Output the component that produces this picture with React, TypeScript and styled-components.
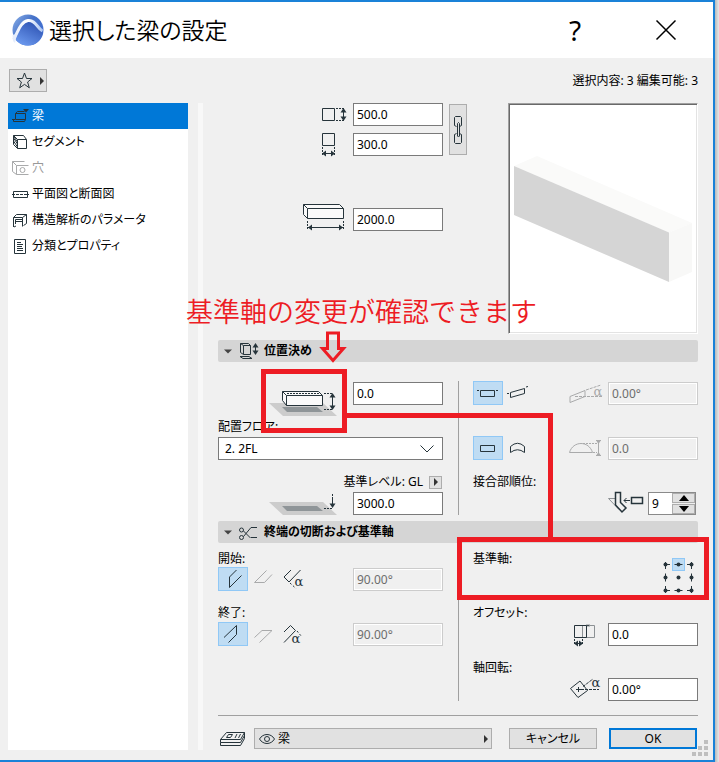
import React, { useState } from "react";
import styled, { createGlobalStyle, css } from "styled-components";

const INK = "#26343b";
const MUTED = "#a9aaab";
const RED = "#ed1c24";
const BLUE = "#1a82d8";

const GlobalStyle = createGlobalStyle`
  * { box-sizing: border-box; }
  body {
    margin: 0;
    background: #d9dadb;
    color: #000;
    font: 12px/16px "Noto Sans", "Noto Sans CJK JP", sans-serif;
    font-feature-settings: "palt";
  }
  button, input, select { font: inherit; font-feature-settings: inherit; color: inherit; margin: 0; }
  button { padding: 0; }
  svg { display: block; flex: none; overflow: visible; }
`;

const Page = styled.div`
  display: flex;
  min-height: 100vh;
  padding-right: 4px;
  background: linear-gradient(to left, #e8e8e9, #b9babb 4px);
`;

const DialogWindow = styled.main`
  position: relative;
  flex: 1;
  display: flex;
  flex-direction: column;
  border: 2px solid ${BLUE};
  border-left: 0;
  background: #f0f0f0;
`;

const TitleBar = styled.header`
  display: flex;
  align-items: center;
  height: 56px;
  padding: 0 26px 0 12px;
  background: #fff;
`;

const Title = styled.h1`
  flex: 1;
  margin: 0 0 0 5px;
  font-size: 23px;
  line-height: 32px;
  font-weight: 350;
`;

const CaptionButton = styled.button`
  display: grid;
  place-items: center;
  width: 42px;
  height: 40px;
  margin-left: 49px;
  border: 0;
  background: none;
  font-size: 28px;
  line-height: 36px;
`;

const Toolbar = styled.div`
  display: flex;
  align-items: flex-start;
  justify-content: space-between;
  height: 45px;
  padding: 11px 15px 0 9px;
`;

const grayButton = css`
  border: 1px solid #adadad;
  background: #e1e1e1;
`;

const FavoriteButton = styled.button`
  ${grayButton}
  display: flex;
  align-items: center;
  gap: 7px;
  width: 38px;
  height: 23px;
  padding-left: 6px;
`;

const Selection = styled.div`
  padding-top: 4px;
`;

const Body = styled.div`
  flex: 1;
  display: grid;
  grid-template-columns: 180px 5px 1fr;
  padding: 0 15px 10px 8px;
`;

const Sidebar = styled.nav`
  background: #fff;
`;

const NavItem = styled.button<{ $active?: boolean }>`
  display: flex;
  align-items: center;
  gap: 3px;
  width: 100%;
  height: 26px;
  padding-left: 4px;
  border: 0;
  background: ${(p) => (p.$active ? "#0078d7" : "transparent")};
  color: ${(p) => (p.$active ? "#fff" : "#000")};
  text-align: left;
  &:disabled { color: #999; }
`;

const Splitter = styled.div`
  margin: 0 -10px 0 10px;
  background: #f8f8f8;
`;

const Panel = styled.div`
  display: flex;
  flex-direction: column;
  padding-left: 25px;
`;

const Geometry = styled.div`
  display: flex;
  align-items: flex-start;
  margin-bottom: 6px;
`;

const Sizes = styled.div`
  flex: 1;
  display: flex;
  flex-direction: column;
  gap: 7px;
`;

const Row = styled.div<{ $top?: number }>`
  display: flex;
  align-items: flex-end;
  justify-content: flex-end;
  gap: 8px;
  margin-top: ${(p) => p.$top ?? 0}px;
`;

const ControlRow = styled(Row)`
  height: 24px;
`;

const ToggleGroup = styled.div`
  display: flex;
  margin-right: auto;
`;

const Toggle = styled.button<{ $on?: boolean }>`
  width: 30px;
  height: 24px;
  border: 1px solid ${(p) => (p.$on ? "#90c8f6" : "transparent")};
  background: ${(p) => (p.$on ? "#bfdcf3" : "transparent")};
  svg { margin: -1px; }
`;

const Field = styled.input`
  width: 90px;
  height: 23px;
  padding: 0 3px;
  border: 1px solid #7a7a7a;
  border-radius: 0;
  background: #fff;
  outline: 0;
  &:disabled {
    border-color: #ccc;
    background: #f0f0f0;
    box-shadow: inset 0 0 0 1px #fff;
    color: #6d6d6d;
  }
`;

const LinkButton = styled.button`
  ${grayButton}
  width: 18px;
  height: 51px;
  margin: 1px 41px 0 6px;
  svg { margin: 0 auto; }
`;

const Preview = styled.div`
  width: 190px;
  height: 231px;
  border: 1px solid;
  border-color: #a0a0a0 #fff #fff #a0a0a0;
  background: #fff;
  box-shadow: inset 1px 1px #696969, inset -1px -1px #e3e3e3;
  padding: 1px;
`;

const SectionHead = styled.button`
  display: flex;
  align-items: center;
  gap: 7px;
  width: 100%;
  height: 22px;
  padding-left: 6px;
  border: 0;
  border-radius: 2px;
  background: #d5d5d5;
  font-weight: 700;
`;

const Columns = styled.div<{ $top?: number }>`
  display: grid;
  grid-template-columns: 1fr 30px 1fr;
  padding-top: ${(p) => p.$top ?? 0}px;
`;

const Divider = styled.div`
  width: 1px;
  margin-left: 15px;
  background: #a0a0a0;
`;

const Caption = styled.label<{ $first?: boolean }>`
  display: block;
  padding: ${(p) => (p.$first ? "8px 0 0" : "14px 0 1px")};
`;

const LevelCaption = styled.div`
  display: flex;
  align-items: center;
  justify-content: flex-end;
  gap: 6px;
  padding: 14px 1px 1px 0;
`;

const SmallMenuButton = styled.button`
  ${grayButton}
  display: grid;
  place-items: center;
  width: 13px;
  height: 13px;
`;

const SelectBox = styled.div`
  display: grid;
  align-items: center;
  width: 100%;
  > * { grid-area: 1 / 1; }
  > svg { justify-self: end; margin-right: 9px; pointer-events: none; }
`;

const Select = styled.select`
  appearance: none;
  width: 100%;
  height: 23px;
  padding: 0 6px;
  border: 1px solid #7a7a7a;
  border-radius: 0;
  background: #fff;
`;

const Spinner = styled.div`
  display: grid;
  grid-template-columns: 23px 23px;
  height: 23px;
  margin-right: 2px;
  border: 1px solid #8a8a8a;
  background: #f0f0f0;
`;

const SpinField = styled.input`
  min-width: 0;
  padding: 0 3px;
  border: 0;
  background: #fff;
  outline: 0;
`;

const SpinButtons = styled.div`
  display: grid;
  grid-template-rows: 1fr 1fr;
  gap: 1px;
  button {
    ${grayButton}
    display: grid;
    place-items: center;
    min-height: 0;
  }
`;

const AnchorArea = styled.fieldset`
  display: flex;
  justify-content: space-between;
  height: 54px;
  min-width: 0;
  margin: 0;
  padding: 0;
  border: 0;
`;

const AnchorGrid = styled.div`
  display: grid;
  grid-template-columns: repeat(3, 13px);
  grid-auto-rows: 13px;
  margin-top: 15px;
`;

const Anchor = styled.label`
  display: grid;
  > * { grid-area: 1 / 1; }
  input { opacity: 0; width: 13px; height: 13px; }
  svg { pointer-events: none; }
  input:checked + svg { background: #bfdcf3; outline: 1px solid #90c8f6; outline-offset: -1px; }
`;

const Footer = styled.footer`
  display: flex;
  align-items: center;
  margin-top: 14px;
  padding: 12px 1px 0 2px;
  border-top: 1px solid #a0a0a0;
`;

const LayerButton = styled.button`
  ${grayButton}
  flex: 1;
  display: flex;
  align-items: center;
  gap: 3px;
  height: 21px;
  margin: 0 17px 0 8px;
  padding: 0 3px 0 4px;
  > svg:last-child { margin-left: auto; }
`;

const DialogButton = styled.button<{ $primary?: boolean }>`
  ${grayButton}
  width: 88px;
  height: 21px;
  line-height: 16px;
  ${(p) => p.$primary && css`
    margin-left: 12px;
    border: 2px solid #0078d7;
  `}
`;

const Grip = styled.svg`
  position: absolute;
  right: 5px;
  bottom: 4px;
`;

const Note = styled.p`
  position: absolute;
  left: 186px;
  top: 291px;
  margin: 0;
  color: ${RED};
  font: 350 27px/36px "Noto Sans CJK JP", sans-serif;
  font-feature-settings: normal;
  white-space: nowrap;
`;

const Marks = styled.svg`
  position: absolute;
  left: 0;
  top: 0;
  pointer-events: none;
`;

type Draw = { w?: number; h?: number; color?: string; children: React.ReactNode };

const Icon = ({ w = 30, h = 24, color = INK, children }: Draw) => (
  <svg width={w} height={h} viewBox={`0 0 ${w} ${h}`} fill="none" stroke={color} color={color} aria-hidden="true">
    {children}
  </svg>
);
const WideIcon = (p: Draw) => <Icon w={80} h={23} {...p} />;
const SideIcon = (p: Draw) => <Icon w={36} h={23} {...p} />;

const Alpha = ({ x, y }: { x: number; y: number }) => (
  <text x={x} y={y} textAnchor="middle" fill="currentColor" stroke="none" fontSize="13" fontFamily="DejaVu Serif">α</text>
);

const VArrow = ({ x, y1, y2, start = true }: { x: number; y1: number; y2: number; start?: boolean }) => (
  <>
    <path d={`M${x} ${y1}V${y2}`} />
    {start && <path d={`M${x} ${y1 - 1}l3 4.500h-6z`} fill="currentColor" stroke="none" />}
    <path d={`M${x} ${y2 + 1}l3-4.500h-6z`} fill="currentColor" stroke="none" />
  </>
);
const HArrow = ({ y, x1, x2 }: { y: number; x1: number; x2: number }) => (
  <>
    <path d={`M${x1} ${y}H${x2}`} />
    <path d={`M${x1} ${y}l4-3v6zM${x2} ${y}l-4-3v6z`} fill="currentColor" stroke="none" />
  </>
);

const RightTriangle = () => (
  <Icon w={4} h={8}><path d="M0 0l4 4-4 4z" fill="#333" stroke="none" /></Icon>
);
const DownTriangle = () => (
  <Icon w={8} h={5}><path d="M0 0.500h8l-4 4z" fill="#444" stroke="none" /></Icon>
);

const Logo = () => (
  <svg width="32" height="32" viewBox="0 0 32 32" aria-hidden="true">
    <defs>
      <linearGradient id="dome" x1="0" y1="0" x2="1" y2="0.8">
        <stop offset="0" stopColor="#8fb4ea" />
        <stop offset="0.45" stopColor="#4672c8" />
        <stop offset="1" stopColor="#3f6fd6" />
      </linearGradient>
      <linearGradient id="sphere" x1="0.8" y1="0" x2="0.2" y2="1">
        <stop offset="0" stopColor="#2a4fb0" />
        <stop offset="1" stopColor="#6d9bf0" />
      </linearGradient>
      <linearGradient id="band" x1="0" y1="0" x2="1" y2="0">
        <stop offset="0" stopColor="#e6edfb" />
        <stop offset="0.5" stopColor="#ffffff" />
        <stop offset="1" stopColor="#a9c4f3" />
      </linearGradient>
    </defs>
    <circle cx="16" cy="16" r="15.500" fill="url(#dome)" />
    <path d="M3 25C7 16 11 8 17 7.500C24 7.500 26 15 31 19C29 27 23 31.500 16 31.500C10 31.500 6 29 3 25Z" fill="url(#sphere)" />
    <path d="M1.500 25.500C6 18 8.500 7.500 16 6.500C23.500 5.500 25 14 30.500 17" fill="none" stroke="url(#band)" strokeWidth="3" />
    <path d="M0.500 21L5 20L3 29L1 27Z" fill="#e6edfb" />
  </svg>
);

const NAV: { label: string; icon: React.ReactNode; off?: boolean }[] = [
  {
    label: "梁",
    icon: (
      <Icon w={17} h={16}>
        <path d="M3.500 5.500h10v6h-10zM0 11.500h3M1.500 12v1.500h11l1-2M3.500 5.500l2-2h7" />
        <path d="M11 1h6l-3 3.500z" fill={INK} stroke="none" />
      </Icon>
    ),
  },
  {
    label: "セグメント",
    icon: (
      <Icon w={17} h={16}>
        <path d="M5.500 5.500h9v9h-9zM1.500 1.500h10l3 4M1.500 1.500v9l4 4M1.500 1.500l4 4" />
        <path d="M1.500 4l4 6M1.500 7l4 6M2 2.500l3 5" />
      </Icon>
    ),
  },
  {
    label: "穴",
    off: true,
    icon: (
      <Icon w={17} h={16} color={MUTED}>
        <path d="M0.500 1.500h12M0.500 1.500v10l4 3v-9l-4-4M4.500 5.500h12M4.500 14.500h12" />
        <circle cx="10.500" cy="10" r="2.500" />
      </Icon>
    ),
  },
  {
    label: "平面図と断面図",
    icon: (
      <Icon w={17} h={16}>
        <path d="M1.500 5.500h14v6h-14z" />
        <path d="M0 8.500h17" strokeDasharray="3 1" />
      </Icon>
    ),
  },
  {
    label: "構造解析のパラメータ",
    icon: (
      <Icon w={17} h={16}>
        <path d="M1.500 15V5.500l3-3h10v9M1.500 5.500h9l4-3M10.500 5.500v9M3.500 12V7.500h7M3.500 9.500h7M11.500 13.500l3-2M4 14l-2 1" />
      </Icon>
    ),
  },
  {
    label: "分類とプロパティ",
    icon: (
      <Icon w={17} h={16}>
        <path d="M2.500 1.500h11v14h-11zM5 4.500h4M5 6.500h6M5 8.500h5M5 10.500h6M5 12.500h6" />
      </Icon>
    ),
  },
];

const ANCHORS = [
  "M6.500 4v7M5 6.500h6", "M2.500 6.500h8", "M6.500 4v7M8 6.500H2",
  "M6.500 2.500v8", "", "M6.500 2.500v8",
  "M6.500 9V2M5 6.500h6", "M2.500 6.500h8", "M6.500 9V2M8 6.500H2",
];

export default function App() {
  const [section, setSection] = useState(0);
  const [anchor, setAnchor] = useState(1);
  const [slope, setSlope] = useState(0);
  const [curve, setCurve] = useState(0);
  const [priority, setPriority] = useState(9);

  return (
    <Page>
      <GlobalStyle />
      <DialogWindow>
        <TitleBar>
          <Logo />
          <Title>選択した梁の設定</Title>
          <CaptionButton aria-label="ヘルプ">?</CaptionButton>
          <CaptionButton aria-label="閉じる">
            <Icon w={20} h={20} color="#000"><path d="M0.500 0.500l19 19M19.500 0.500l-19 19" strokeWidth="1.500" /></Icon>
          </CaptionButton>
        </TitleBar>

        <Toolbar>
          <FavoriteButton aria-label="お気に入り">
            <Icon w={17} h={17}>
              <path d="M8.500 1l2 5.500h5.500l-4.400 3.500 1.700 5.800-4.800-3.400-4.800 3.400 1.700-5.800L1 6.500h5.500z" />
            </Icon>
            <RightTriangle />
          </FavoriteButton>
          <Selection>選択内容: 3 編集可能: 3</Selection>
        </Toolbar>

        <Body>
          <Sidebar>
            {NAV.map((n, i) => (
              <NavItem key={n.label} $active={section === i} disabled={n.off} onClick={() => setSection(i)}>
                {n.icon}
                {n.label}
              </NavItem>
            ))}
          </Sidebar>
          <Splitter />

          <Panel>
            <Geometry>
              <Sizes>
                <Row>
                  <WideIcon>
                    <path d="M57.500 5.500h12v12h-12z" />
                    <path d="M71 5.500h8M71 17.500h8" strokeDasharray="2 1" />
                    <VArrow x={78.5} y1={6} y2={17} />
                  </WideIcon>
                  <Field aria-label="高さ" defaultValue="500.0" />
                </Row>
                <Row>
                  <WideIcon>
                    <path d="M57.500 0.500h12v12h-12z" />
                    <path d="M57.500 14v8M69.500 14v8" strokeDasharray="2 1" />
                    <HArrow y={20.5} x1={57} x2={70} />
                  </WideIcon>
                  <Field aria-label="幅" defaultValue="300.0" />
                </Row>
                <Row $top={45}>
                  <WideIcon>
                    <path d="M38.500-3.500h36l4 4v10h-36l-4-4z" fill="#fafafa" />
                    <path d="M38.500-3.500l4 4h36M42.500 0.500v10" />
                    <path d="M42.500 13v9M78.500 13v9" strokeDasharray="2 1" />
                    <HArrow y={19.5} x1={43} x2={78} />
                  </WideIcon>
                  <Field aria-label="長さ" defaultValue="2000.0" />
                </Row>
              </Sizes>
              <LinkButton aria-label="幅と高さを連動">
                <Icon w={8} h={28}>
                  <path d="M2.500 10.500l-2-1v-8l1-1h5l1 1v8l-2 1M2.500 17.500l-2 1v8l1 1h5l1-1v-8l-2-1" />
                  <path d="M3.500 20V7.500l1-1 1 1V20l-1 1z" />
                </Icon>
              </LinkButton>
              <Preview>
                <svg width="186" height="227" viewBox="0 0 186 227" role="img" aria-label="梁のプレビュー">
                  <path d="M4 61L27 51L182 118L159 127.500Z" fill="#fafaf9" />
                  <path d="M159 127.500L182 118V167L159 177Z" fill="#f8f8f7" />
                  <path d="M4 61L159 127.500V177L4 110Z" fill="#d5d5d5" />
                </svg>
              </Preview>
            </Geometry>

            <SectionHead aria-expanded="true">
              <DownTriangle />
              <Icon w={18} h={18}>
                <path d="M4.500 3.500h7v9h-7zM4.500 3.500l-3-2v9l3 2M1.500 1.500h8l2 2M1 14.500h9l3 2H4z" />
                <VArrow x={16.5} y1={2} y2={12} />
              </Icon>
              位置決め
            </SectionHead>
            <Columns $top={19}>
              <div>
                <ControlRow>
                  <WideIcon>
                    <path d="M4 21H58L72 34H18z" fill="#ccc" stroke="none" />
                    <path d="M17 25H52L58 30H22z" fill="#8f9598" stroke="none" />
                    <path d="M17.500 9.500h36l4 4v10h-36l-4-5z" fill="#fafafa" />
                    <path d="M17.500 9.500l4 4h36M21.500 13.500v10" />
                    <path d="M22 11.500h34M59 11.500h9M59 27.500h9" strokeDasharray="2 1" />
                    <VArrow x={67.5} y1={12} y2={27} />
                  </WideIcon>
                  <Field aria-label="フロアからの高さ" defaultValue="0.0" />
                </ControlRow>
                <Caption htmlFor="story">配置フロア:</Caption>
                <ControlRow>
                  <SelectBox>
                    <Select id="story"><option>2. 2FL</option></Select>
                    <Icon w={14} h={8}><path d="M0.500 0.500L7 7L13.500 0.500" /></Icon>
                  </SelectBox>
                </ControlRow>
                <LevelCaption>
                  <label htmlFor="level">基準レベル: GL</label>
                  <SmallMenuButton aria-label="基準レベルの選択"><RightTriangle /></SmallMenuButton>
                </LevelCaption>
                <ControlRow>
                  <WideIcon>
                    <path d="M4 10H58L72 23H18z" fill="#ccc" stroke="none" />
                    <path d="M17 14H52L58 19H22z" fill="#8f9598" stroke="none" />
                    <path d="M59 16.500h9M67.500 2v6" strokeDasharray="2 1" />
                    <VArrow x={67.5} y1={7} y2={15} start={false} />
                  </WideIcon>
                  <Field id="level" defaultValue="3000.0" />
                </ControlRow>
              </div>
              <Divider />
              <div>
                <ControlRow>
                  <ToggleGroup>
                    <Toggle aria-label="水平" aria-pressed={slope === 0} $on={slope === 0} onClick={() => setSlope(0)}>
                      <Icon><path d="M7.500 9.500h14v6h-14zM4 9.500h2M23 9.500h2" /></Icon>
                    </Toggle>
                    <Toggle aria-label="傾斜" aria-pressed={slope === 1} $on={slope === 1} onClick={() => setSlope(1)}>
                      <Icon><path d="M7.500 11.500l14-4v5l-14 4zM4 12.500h2M23 6l2-0.500" /></Icon>
                    </Toggle>
                  </ToggleGroup>
                  <SideIcon color={MUTED}>
                    <path d="M6 14.500l15-6v6l-15 6z" />
                    <path d="M22 8l15-5M11 14.500h27" strokeDasharray="3 1" />
                    <Alpha x={34} y={14} />
                  </SideIcon>
                  <Field aria-label="傾斜角度" defaultValue="0.00°" disabled />
                </ControlRow>
                <ControlRow $top={31}>
                  <ToggleGroup>
                    <Toggle aria-label="直線" aria-pressed={curve === 0} $on={curve === 0} onClick={() => setCurve(0)}>
                      <Icon><path d="M7.500 9.500h14v6h-14z" /></Icon>
                    </Toggle>
                    <Toggle aria-label="曲線" aria-pressed={curve === 1} $on={curve === 1} onClick={() => setCurve(1)}>
                      <Icon><path d="M7.500 10.500Q14.500 4 21.500 10.500V16.500Q14.500 11 7.500 16.500Z" /></Icon>
                    </Toggle>
                  </ToggleGroup>
                  <SideIcon color={MUTED}>
                    <path d="M5.500 15.500C9 3.500 25 3.500 28.500 15.500Z" />
                    <path d="M19 6.500h14M29 15.500h4" strokeDasharray="2 1" />
                    <path d="M34.500 4v14M32 3.500h5M32 18.500h5" />
                    <path d="M32.500 4h4l-2 3zM32.500 18h4l-2-3z" fill="currentColor" stroke="none" />
                  </SideIcon>
                  <Field aria-label="曲率の高さ" defaultValue="0.0" disabled />
                </ControlRow>
                <Caption htmlFor="priority">接合部順位:</Caption>
                <ControlRow>
                  <SideIcon>
                    <path d="M11 6.500H4.500L15 17.500" stroke="#8c9194" />
                    <path d="M11.500 0.500h5v10l5.500 5.500-4 4-6.500-7z" strokeWidth="1.500" />
                    <path d="M26 8.500h-6M22.500 6l-2.500 2.500 2.500 2.500" />
                    <path d="M27.500 5.500h11v6h-11z" strokeWidth="1.500" />
                  </SideIcon>
                  <Spinner>
                    <SpinField id="priority" value={priority} onChange={(e) => setPriority(Number(e.target.value) || 0)} />
                    <SpinButtons>
                      <button aria-label="上げる" onClick={() => setPriority(priority + 1)}>
                        <Icon w={10} h={6}><path d="M0 6l5-6 5 6z" fill="#000" stroke="none" /></Icon>
                      </button>
                      <button aria-label="下げる" onClick={() => setPriority(priority - 1)}>
                        <Icon w={10} h={6}><path d="M0 0l5 6 5-6z" fill="#000" stroke="none" /></Icon>
                      </button>
                    </SpinButtons>
                  </Spinner>
                </ControlRow>
              </div>
            </Columns>

            <Row $top={6}>
              <SectionHead aria-expanded="true">
                <DownTriangle />
                <Icon w={18} h={16}>
                  <circle cx="2.500" cy="6" r="2" />
                  <circle cx="2.500" cy="13.500" r="2" />
                  <path d="M4.500 7l7 7M4.500 12.500L12 3.500H18M12 13.500h6" />
                </Icon>
                終端の切断および基準軸
              </SectionHead>
            </Row>
            <Columns>
              <div>
                <Caption htmlFor="begin" $first>開始:</Caption>
                <ControlRow>
                  <ToggleGroup>
                    <Toggle aria-label="開始 垂直" aria-pressed="true" $on>
                      <Icon><path d="M18.500 3L11.500 10V20.500L23.500 8.500" /></Icon>
                    </Toggle>
                    <Toggle aria-label="開始 水平" aria-pressed="false">
                      <Icon color={MUTED}><path d="M18.500 3.500L6.500 15.500H16.500L24 7.500" /></Icon>
                    </Toggle>
                    <Toggle aria-label="開始 角度指定" aria-pressed="false">
                      <Icon>
                        <path d="M13 3L6 10L11 15L22.500 3" />
                        <path d="M12 16l6 5.500" strokeDasharray="2 2" />
                        <Alpha x={21} y={19} />
                      </Icon>
                    </Toggle>
                  </ToggleGroup>
                  <Field id="begin" defaultValue="90.00°" disabled />
                </ControlRow>
                <Caption htmlFor="end">終了:</Caption>
                <ControlRow>
                  <ToggleGroup>
                    <Toggle aria-label="終了 垂直" aria-pressed="true" $on>
                      <Icon><path d="M6 15.500L18.500 3.500V12.500L10.500 20.500" /></Icon>
                    </Toggle>
                    <Toggle aria-label="終了 水平" aria-pressed="false">
                      <Icon color={MUTED}><path d="M6.500 15.500L14 8.500H24L11.500 20.500" /></Icon>
                    </Toggle>
                    <Toggle aria-label="終了 角度指定" aria-pressed="false">
                      <Icon>
                        <path d="M6 10L12.500 3.500L17.500 8.500L6 20.500" />
                        <path d="M19 9l5 6" strokeDasharray="2 2" />
                        <Alpha x={18} y={21} />
                      </Icon>
                    </Toggle>
                  </ToggleGroup>
                  <Field id="end" defaultValue="90.00°" disabled />
                </ControlRow>
              </div>
              <Divider />
              <div>
                <AnchorArea>
                  <Caption as="span" $first>基準軸:</Caption>
                  <AnchorGrid role="radiogroup" aria-label="基準軸">
                    {ANCHORS.map((d, i) => (
                      <Anchor key={i}>
                        <input type="radio" name="anchor" aria-label={`基準点 ${i + 1}`} checked={anchor === i} onChange={() => setAnchor(i)} />
                        <Icon w={13} h={13}>
                          <path d={d || "M6 6.500h1"} />
                          <circle cx="6.500" cy="6.500" r="2" fill={INK} stroke="none" />
                        </Icon>
                      </Anchor>
                    ))}
                  </AnchorGrid>
                </AnchorArea>
                <Caption htmlFor="offset" $first>オフセット:</Caption>
                <ControlRow $top={1}>
                  <SideIcon>
                    <path d="M18.500 2.500h12v12h-12z" stroke="#8c9194" />
                    <path d="M10.500 2.500h12v12h-12z" />
                    <path d="M23 3.500l2-2M23 1.500l2 2" />
                    <path d="M10.500 16v6M18.500 16v6" strokeDasharray="2 1" />
                    <HArrow y={20.5} x1={10} x2={19} />
                  </SideIcon>
                  <Field id="offset" defaultValue="0.0" />
                </ControlRow>
                <Caption htmlFor="rotation">軸回転:</Caption>
                <ControlRow>
                  <SideIcon>
                    <path d="M6.500 10.500L16 3L23.500 12.500L14 19.500ZM12 11.500h5M14.500 9v5" />
                    <path d="M19 8.500l10-7.500M17 11.500h18" strokeDasharray="3 1" />
                    <Alpha x={32} y={9} />
                  </SideIcon>
                  <Field id="rotation" defaultValue="0.00°" />
                </ControlRow>
              </div>
            </Columns>

            <Footer>
              <Icon w={26} h={16}>
                <path d="M6.500 1.500h18l-4 7h-20zM0.500 8.500v3h20l4-7M0.500 11.500v3h20l4-7M24.500 1.500v6M8.500 3.500h4l-2 3h-4zM17 3l-2 4M20.500 3l-2 4" />
              </Icon>
              <LayerButton aria-haspopup="listbox">
                <Icon w={16} h={12}>
                  <path d="M0.500 6C4 0 12 0 15.500 6C12 12 4 12 0.500 6Z" />
                  <circle cx="8" cy="6" r="2.500" />
                </Icon>
                梁
                <RightTriangle />
              </LayerButton>
              <DialogButton>キャンセル</DialogButton>
              <DialogButton $primary>OK</DialogButton>
            </Footer>
          </Panel>
        </Body>

        <Grip width="16" height="16" fill="#bfbfbf" aria-hidden="true">
          <path d="M12 0h4v4h-4zM6 6h4v4h-4zM12 6h4v4h-4zM0 12h4v4h-4zM6 12h4v4h-4zM12 12h4v4h-4z" />
        </Grip>
        <Note>基準軸の変更が確認できます</Note>
        <Marks width="713" height="758" viewBox="0 2 713 758" fill="none" stroke={RED} strokeWidth="5" aria-hidden="true">
          <path d="M263.500 371.500h81v59h-81z" />
          <path d="M459.500 539.500h247v58h-247z" />
          <path d="M347 415.500h203.500v125" />
          <path d="M327.500 333h11v15.500h5L333 360.500l-10.500-12h5z" strokeWidth="3" />
        </Marks>
      </DialogWindow>
    </Page>
  );
}
